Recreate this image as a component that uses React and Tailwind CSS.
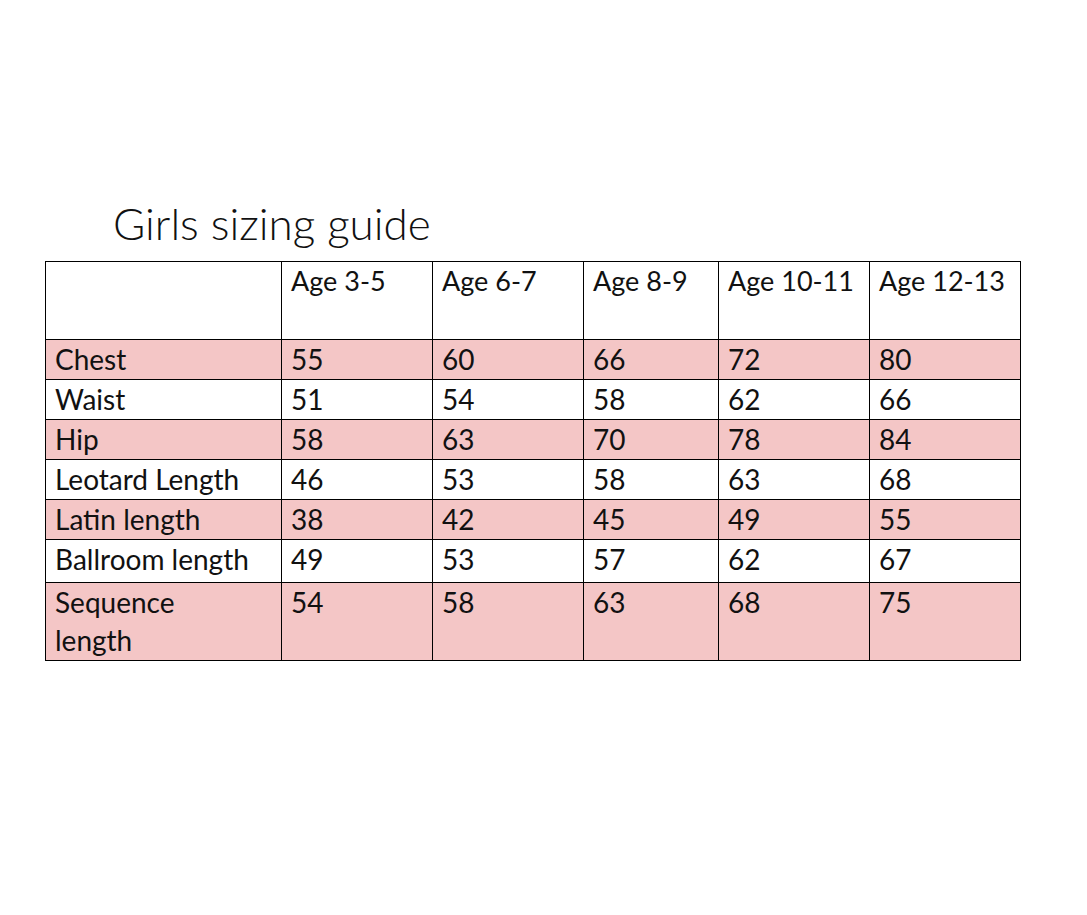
import React from "react";

const headers = ["Age 3-5", "Age 6-7", "Age 8-9", "Age 10-11", "Age 12-13"];
const rows = [
  { label: "Chest", vals: ["55", "60", "66", "72", "80"], pink: true, h: "h-[40px]" },
  { label: "Waist", vals: ["51", "54", "58", "62", "66"], pink: false, h: "h-[40px]" },
  { label: "Hip", vals: ["58", "63", "70", "78", "84"], pink: true, h: "h-[40px]" },
  { label: "Leotard Length", vals: ["46", "53", "58", "63", "68"], pink: false, h: "h-[40px]" },
  { label: "Latin length", vals: ["38", "42", "45", "49", "55"], pink: true, h: "h-[40px]" },
  { label: "Ballroom length", vals: ["49", "53", "57", "62", "67"], pink: false, h: "h-[43px]" },
  { label: "Sequence length", vals: ["54", "58", "63", "68", "75"], pink: true, h: "h-[78px]", wrap: true },
];

const cell = "border border-black align-top pl-[9px] pr-[2px] p-0 text-left font-normal";

export default function App() {
  return (
    <div className="w-[1087px] h-[915px] bg-white text-[#111] font-['Lato','Open_Sans',sans-serif] pt-[199px]">
      <h1 className="pl-[113px] text-[44px] leading-[48px] font-light mb-[14px]">Girls sizing guide</h1>
      <table className="ml-[45px] border-collapse table-fixed w-[975px] text-[28px] leading-[38px]">
        <colgroup>
          <col className="w-[236px]" />
          <col className="w-[151px]" />
          <col className="w-[151px]" />
          <col className="w-[135px]" />
          <col className="w-[151px]" />
          <col className="w-[151px]" />
        </colgroup>
        <thead>
          <tr className="h-[78px]">
            <th className={cell}></th>
            {headers.map((h) => (
              <th key={h} className={cell + " whitespace-nowrap text-[27px]"}>{h}</th>
            ))}
          </tr>
        </thead>
        <tbody>
          {rows.map((r) => (
            <tr key={r.label} className={r.h + (r.pink ? " bg-[#f4c6c6]" : " bg-white")}>
              <td className={cell + (r.wrap ? " whitespace-normal pr-[60px]" : " whitespace-nowrap")}>{r.label}</td>
              {r.vals.map((v, i) => (
                <td key={i} className={cell}>{v}</td>
              ))}
            </tr>
          ))}
        </tbody>
      </table>
    </div>
  );
}
